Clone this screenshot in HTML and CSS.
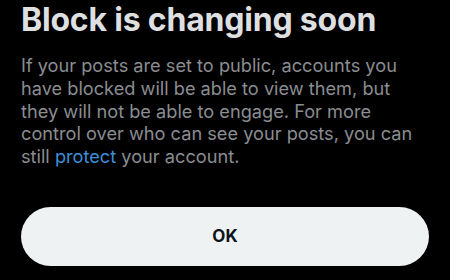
FILE: index.html
```html
<!DOCTYPE html>
<html lang="en">
<head>
<meta charset="utf-8">
<link rel="stylesheet" href="styles.css">
</head>
<body>
<div class="sheet">
  <h1 class="title">Block is changing soon</h1>
  <p class="desc">If your posts are set to public, accounts you have blocked will be able to view them, but they will not be able to engage. For more control over who can see your posts, you can still <a class="link" href="#">protect</a> your account.</p>
  <button class="ok">OK</button>
</div>
</body>
</html>
```
FILE: styles.css
```css
html, body {
  margin: 0;
  padding: 0;
  background: #000;
  width: 450px;
  height: 280px;
  overflow: hidden;
}
.sheet {
  display: flex;
  flex-direction: column;
  padding: 0 21px;
  font-family: Inter, "Liberation Sans", sans-serif;
}
.title {
  margin: 0;
  font-size: 32px;
  line-height: 40px;
  font-weight: 700;
  color: #dedfe0;
  letter-spacing: -0.2px;
  white-space: nowrap;
}
.desc {
  margin: 14px 0 0;
  width: 396px;
  font-size: 18.2px;
  line-height: 22.8px;
  color: #8a8d91;
  font-weight: 400;
}
.link {
  color: #3d8fd8;
  text-decoration: none;
}
.ok {
  margin-top: 39px;
  height: 59px;
  width: 408px;
  border: none;
  border-radius: 30px;
  background: #eef2f3;
  color: #0f1419;
  font-family: Inter, "Liberation Sans", sans-serif;
  font-size: 17px;
  font-weight: 700;
}
```
